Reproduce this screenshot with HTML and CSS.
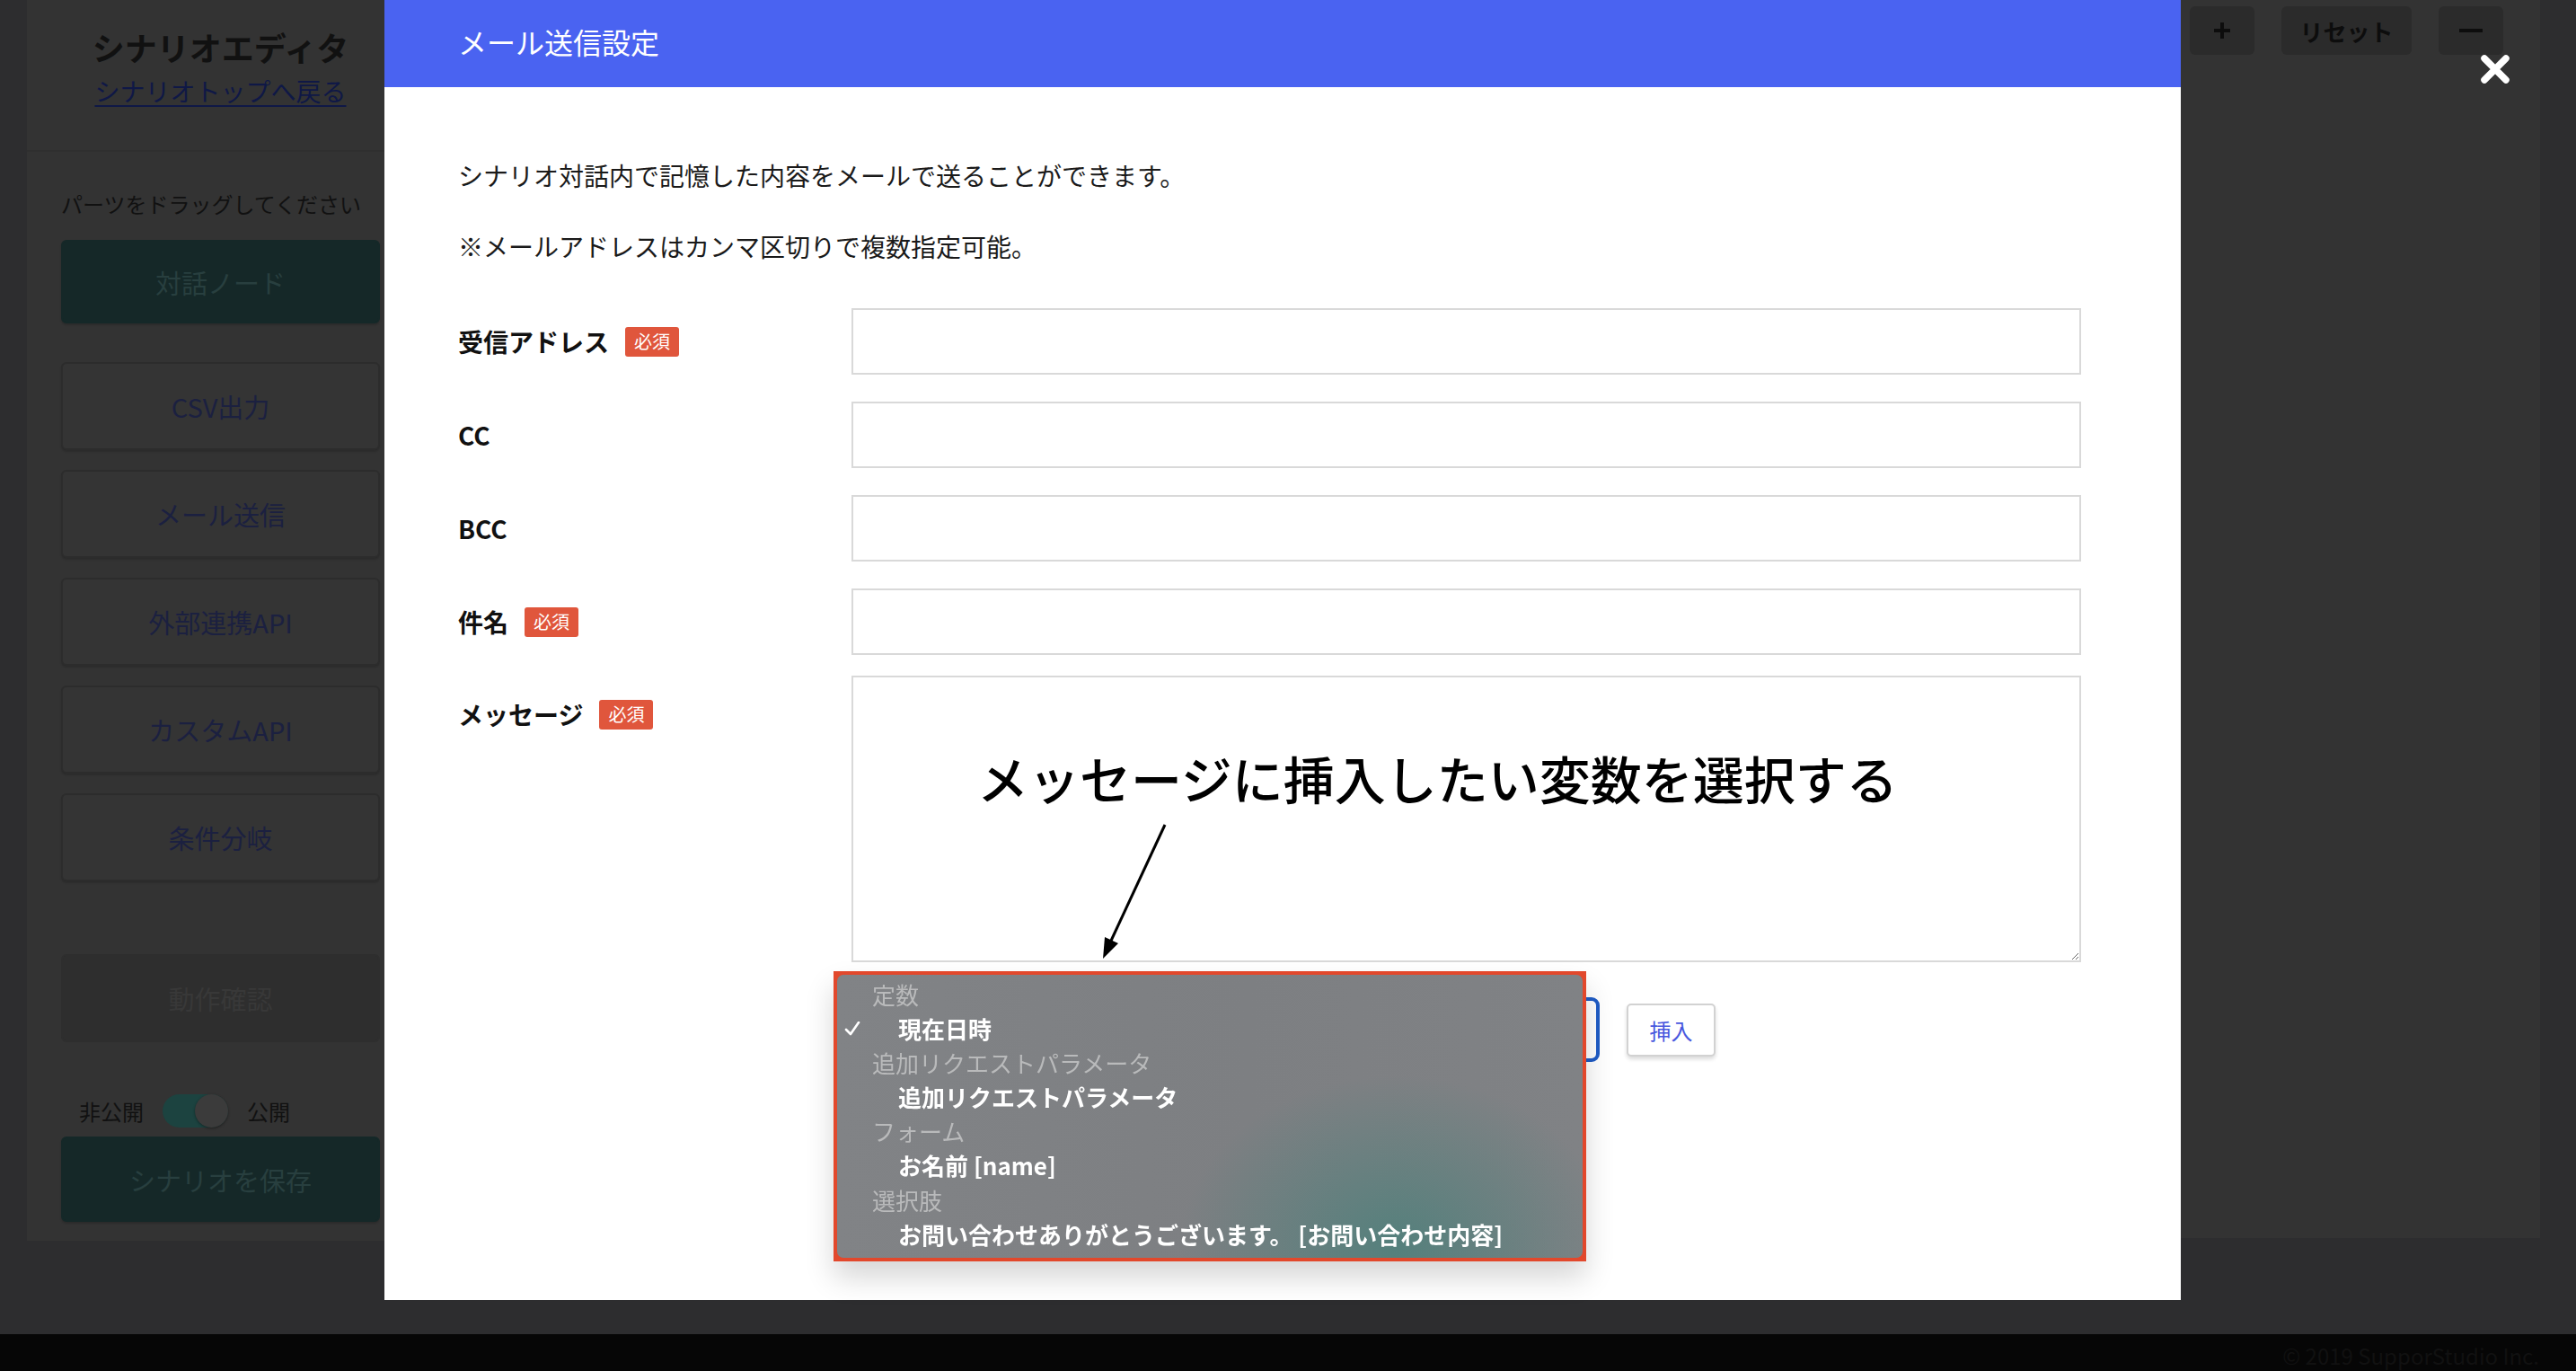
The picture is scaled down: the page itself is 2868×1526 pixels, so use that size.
FILE: index.html
```html
<!DOCTYPE html>
<html lang="ja">
<head>
<meta charset="utf-8">
<title>シナリオエディタ</title>
<link rel="stylesheet" href="styles.css">
</head>
<body>
<div class="app">
  <div class="workspace">
    <aside class="sidebar">
      <div class="sidebar-head">
        <h1 class="sidebar-title">シナリオエディタ</h1>
        <a class="sidebar-back" href="#">シナリオトップへ戻る</a>
      </div>
      <div class="sidebar-body">
        <p class="hint">パーツをドラッグしてください</p>
        <div class="part part-primary part-node">対話ノード</div>
        <div class="part-list">
          <div class="part">CSV出力</div>
          <div class="part">メール送信</div>
          <div class="part">外部連携API</div>
          <div class="part">カスタムAPI</div>
          <div class="part">条件分岐</div>
        </div>
        <div class="part part-muted">動作確認</div>
        <div class="publish">
          <span>非公開</span>
          <span class="switch"><span class="switch-knob"></span></span>
          <span>公開</span>
        </div>
        <div class="part part-primary part-save">シナリオを保存</div>
      </div>
    </aside>
    <main class="canvas">
      <div class="toolbar">
        <button class="tool-btn tool-zoom" aria-label="拡大">
          <svg width="24" height="24" viewBox="0 0 24 24"><path d="M12 3 V21 M3 12 H21" stroke="#0d0d0d" stroke-width="4" fill="none"/></svg>
        </button>
        <button class="tool-btn tool-reset">リセット</button>
        <button class="tool-btn tool-zoom" aria-label="縮小">
          <svg width="30" height="24" viewBox="0 0 30 24"><path d="M2 12 H28" stroke="#0d0d0d" stroke-width="4" fill="none"/></svg>
        </button>
      </div>
    </main>
  </div>
  <footer class="footer">© 2019 SupporStudio Inc.</footer>
</div>

<div class="modal-layer">
  <button class="modal-close" aria-label="閉じる">
    <svg viewBox="0 0 34 34" width="34" height="34"><path d="M5 5 L29 29 M29 5 L5 29" stroke="#fff" stroke-width="7.5" stroke-linecap="round" fill="none"/></svg>
  </button>
  <section class="modal">
    <header class="modal-header">メール送信設定</header>
    <div class="modal-body">
      <p class="lead">シナリオ対話内で記憶した内容をメールで送ることができます。</p>
      <p class="lead lead-note">※メールアドレスはカンマ区切りで複数指定可能。</p>

      <div class="form">
        <div class="field">
          <label class="field-label">受信アドレス<span class="badge">必須</span></label>
          <input class="input" type="text">
        </div>
        <div class="field">
          <label class="field-label">CC</label>
          <input class="input" type="text">
        </div>
        <div class="field">
          <label class="field-label">BCC</label>
          <input class="input" type="text">
        </div>
        <div class="field field-tight">
          <label class="field-label">件名<span class="badge">必須</span></label>
          <input class="input" type="text">
        </div>
        <div class="field field-message">
          <label class="field-label field-label-top">メッセージ<span class="badge">必須</span></label>
          <div class="textarea-wrap">
            <textarea class="textarea"></textarea>
            <div class="callout">メッセージに挿入したい変数を選択する</div>
            <svg class="callout-arrow" width="400" height="330" viewBox="0 0 400 330">
              <line x1="349" y1="166" x2="289" y2="295" stroke="#000" stroke-width="3"/>
              <polygon points="280,315 297,298 282,291" fill="#000"/>
            </svg>
          </div>
        </div>

        <div class="insert-row">
          <div class="select-box"></div>
          <button class="insert-btn">挿入</button>

          <div class="popup">
            <div class="popup-inner">
              <div class="opt-group">定数</div>
              <div class="opt opt-checked">
                <svg class="check" width="18" height="16" viewBox="0 0 18 16"><polyline points="2,9 7,14 16,1" fill="none" stroke="#fff" stroke-width="2.6" stroke-linecap="round" stroke-linejoin="round"/></svg>
                現在日時
              </div>
              <div class="opt-group">追加リクエストパラメータ</div>
              <div class="opt">追加リクエストパラメータ</div>
              <div class="opt-group">フォーム</div>
              <div class="opt">お名前 [name]</div>
              <div class="opt-group">選択肢</div>
              <div class="opt">お問い合わせありがとうございます。 [お問い合わせ内容]</div>
            </div>
          </div>
        </div>
      </div>
    </div>
  </section>
</div>
</body>
</html>
```

FILE: styles.css
```css
* { box-sizing: border-box; }

html, body {
  margin: 0;
  width: 2868px;
  height: 1526px;
  overflow: hidden;
}

body {
  background: #2d2d2e;
  font-family: "Noto Sans CJK JP", "Noto Sans", sans-serif;
  color: #111;
}

/* ---------- editor shell (shown dimmed behind the dialog) ---------- */

.app {
  display: flex;
  flex-direction: column;
  height: 1526px;
}

.workspace {
  flex: none;
  display: flex;
  align-items: flex-start;
  gap: 30px;
  height: 1485px;
  padding: 0 40px 0 30px;
  background: #2d2d2f;
}

.sidebar {
  flex: none;
  width: 431px;
  height: 1381px;
  background: #333;
}

.sidebar-head {
  height: 169px;
  border-bottom: 2px solid #2f2f2f;
  text-align: center;
  padding-top: 28px;
}

.sidebar-title {
  margin: 0;
  font-size: 36px;
  line-height: 48px;
  font-weight: 700;
  color: #111;
}

.sidebar-back {
  display: inline-block;
  margin-top: 5px;
  font-size: 28px;
  line-height: 40px;
  color: #0f1846;
  text-decoration: underline;
  text-underline-offset: 4px;
}

.sidebar-body {
  padding: 0 38px 21px;
}

.hint {
  margin: 40px 0 22px;
  font-size: 24px;
  line-height: 36px;
  color: #111;
}

.part {
  height: 98px;
  border: 2px solid #2c2c2c;
  border-radius: 6px;
  background: #343434;
  color: #1b2040;
  font-size: 29px;
  display: flex;
  align-items: center;
  justify-content: center;
  box-shadow: 0 2px 2px rgba(0, 0, 0, 0.15);
}

.part-list {
  display: flex;
  flex-direction: column;
  gap: 22px;
  margin-top: 43px;
}

.part-primary {
  background: #152828;
  border-color: #152828;
  color: #283f3f;
}

.part-node { height: 93px; }

.part-muted {
  margin-top: 81px;
  background: #2e2e2e;
  border-color: #2e2e2e;
  color: #383838;
  box-shadow: none;
}

.publish {
  display: flex;
  align-items: center;
  gap: 21px;
  height: 37px;
  margin-top: 58px;
  padding-left: 20px;
  font-size: 24px;
  color: #111;
}

.switch {
  position: relative;
  width: 73px;
  height: 37px;
  border-radius: 19px;
  background: #1c4340;
}

.switch-knob {
  position: absolute;
  right: 0;
  top: 0;
  width: 37px;
  height: 37px;
  border-radius: 50%;
  background: #3b3b3b;
  box-shadow: 0 1px 3px rgba(0, 0, 0, 0.4);
}

.part-save {
  margin-top: 10px;
  height: 95px;
}

.canvas {
  flex: 1;
  height: 1378px;
  background: #333;
}

.toolbar {
  display: flex;
  justify-content: flex-end;
  gap: 30px;
  padding: 7px 41px 0 0;
}

.tool-btn {
  height: 54px;
  border: 0;
  border-radius: 6px;
  background: #2b2b2b;
  color: #0d0d0d;
  font-family: inherit;
  font-size: 26px;
  font-weight: 700;
  padding: 0;
  display: flex;
  align-items: center;
  justify-content: center;
}

.tool-zoom { width: 72px; }
.tool-reset { width: 145px; }

.footer {
  flex: 1;
  background: #060606;
  color: #111;
  font-size: 24px;
  line-height: 30px;
  text-align: right;
  padding: 9px 41px 0 0;
}

/* ---------- mail settings dialog ---------- */

.modal-layer {
  position: fixed;
  inset: 0;
}

.modal-close {
  position: absolute;
  left: 2761px;
  top: 60px;
  width: 34px;
  height: 34px;
  padding: 0;
  border: 0;
  background: none;
}

.modal-close svg { display: block; }

.modal {
  position: absolute;
  left: 428px;
  top: 0;
  width: 2000px;
  height: 1447px;
  background: #fff;
}

.modal-header {
  height: 97px;
  display: flex;
  align-items: center;
  padding: 0 0 5px 82px;
  background: #4a63f1;
  color: #fff;
  font-size: 32px;
}

.modal-body {
  padding: 77px 111px 0 82px;
}

.lead {
  margin: 0;
  font-size: 28px;
  line-height: 42px;
  color: #1a1a1a;
}

.lead-note { margin-top: 37px; }

.form { margin-top: 48px; }

.field {
  display: flex;
  align-items: center;
  margin-bottom: 30px;
}

.field-tight { margin-bottom: 23px; }

.field-label {
  flex: none;
  width: 438px;
  display: flex;
  align-items: center;
  font-size: 28px;
  line-height: 42px;
  font-weight: 700;
  color: #111;
}

.field-message { align-items: flex-start; margin-bottom: 0; }

.field-label-top { padding-top: 22px; }

.badge {
  display: inline-flex;
  align-items: center;
  justify-content: center;
  width: 60px;
  height: 33px;
  margin-left: 18px;
  border-radius: 3px;
  background: #e0563c;
  color: #fff;
  font-size: 20px;
  font-weight: 400;
}

.input {
  flex: 1;
  height: 74px;
  border: 2px solid #d9d9d9;
  border-radius: 0;
  background: #fff;
  font-family: inherit;
  font-size: 28px;
  outline: none;
}

.textarea-wrap {
  position: relative;
  flex: 1;
}

.textarea {
  display: block;
  width: 100%;
  height: 319px;
  border: 2px solid #d9d9d9;
  border-radius: 0;
  font-family: inherit;
  font-size: 28px;
  resize: vertical;
  outline: none;
}

.callout {
  position: absolute;
  left: 140px;
  top: 85px;
  font-size: 57px;
  line-height: 57px;
  font-weight: 500;
  color: #000;
  white-space: nowrap;
}

.callout-arrow {
  position: absolute;
  left: 0;
  top: 0;
  overflow: visible;
}

.insert-row {
  position: relative;
  display: flex;
  align-items: center;
  gap: 30px;
  margin: 39px 0 0 438px;
}

.select-box {
  width: 833px;
  height: 72px;
  border: 4px solid #1f5cc6;
  border-radius: 9px;
  background: #fff;
}

.insert-btn {
  width: 99px;
  height: 59px;
  border: 2px solid #d2d2d2;
  border-radius: 5px;
  background: #fff;
  box-shadow: 0 3px 4px rgba(0, 0, 0, 0.14);
  color: #4858de;
  font-family: inherit;
  font-size: 24px;
  padding: 0;
}

/* native option list, outlined in red */
.popup {
  position: absolute;
  left: -20px;
  top: -29px;
  width: 838px;
  height: 323px;
  border: 4px solid #e2482c;
  background: #e2482c;
  box-shadow: 0 18px 30px rgba(0, 0, 0, 0.16);
}

.popup-inner {
  height: 100%;
  padding-top: 3px;
  border-radius: 7px;
  background:
    radial-gradient(ellipse 240px 190px at 75% 96%, rgba(82, 128, 124, 0.95), rgba(82, 128, 124, 0) 100%),
    linear-gradient(90deg, #818386 0%, #7d7f82 55%, #808285 100%);
  font-size: 26px;
  line-height: 38.1px;
}

.opt-group {
  padding-left: 39px;
  color: #b9babb;
}

.opt {
  position: relative;
  padding-left: 68px;
  color: #fff;
  font-weight: 700;
  white-space: nowrap;
}

.check {
  position: absolute;
  left: 8px;
  top: 11px;
}
```
